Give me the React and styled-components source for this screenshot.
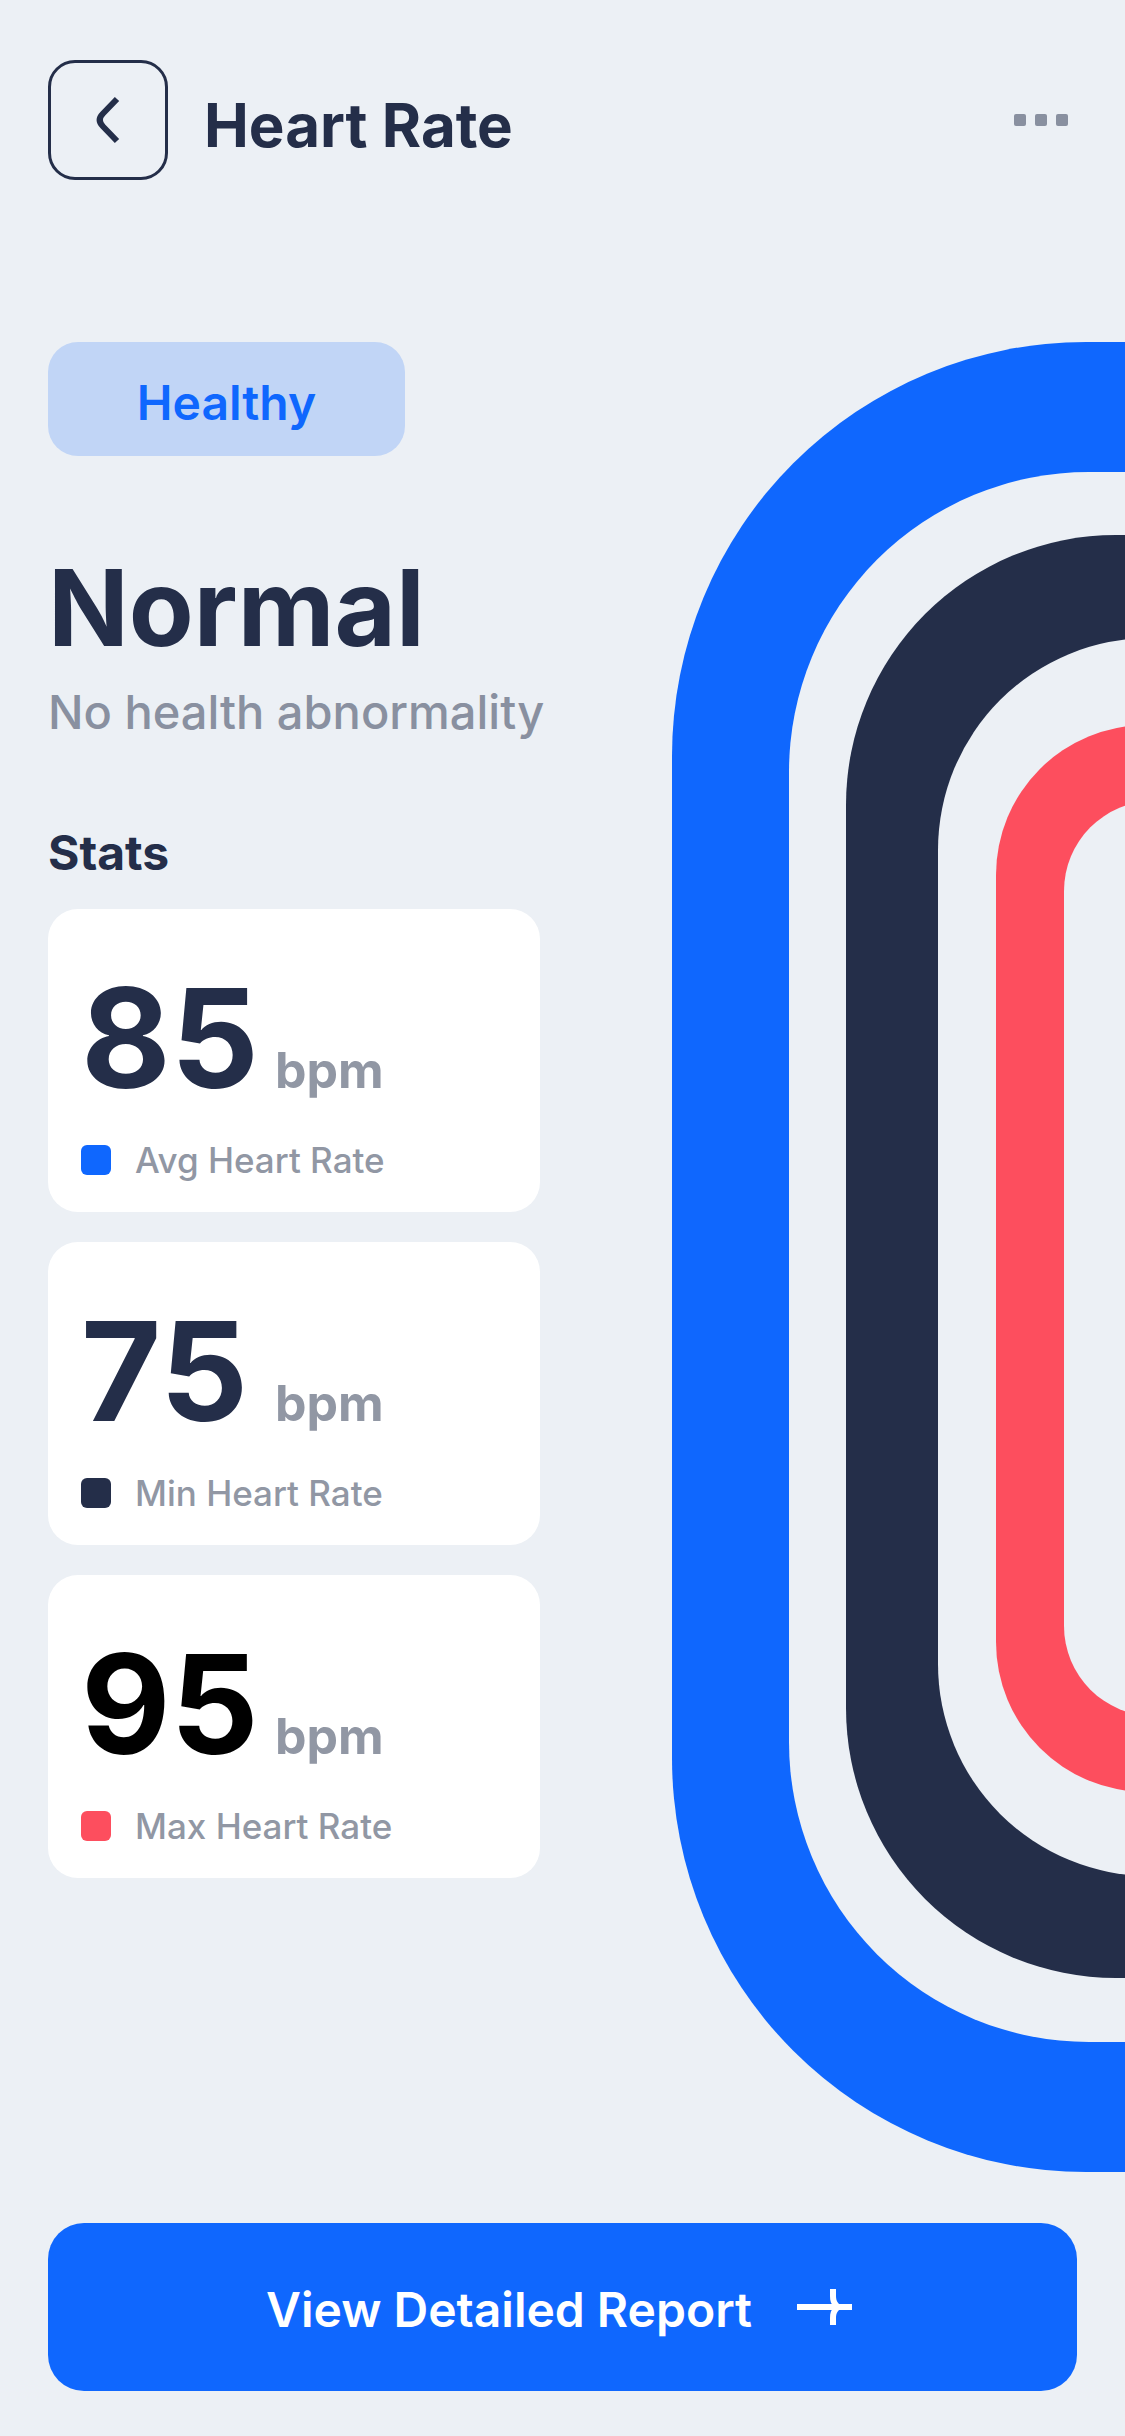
import React from "react";
import styled, { createGlobalStyle } from "styled-components";

const color = {
  page: "#ecf0f5",
  ink: "#242e49",
  blue: "#0f67fe",
  blueSoft: "#c1d5f6",
  red: "#fd4e5e",
  muted: "#8990a0",
  mutedCard: "#9197a4",
};

const GlobalStyle = createGlobalStyle`
  *, *::before, *::after { box-sizing: border-box; }
  body {
    margin: 0;
    background: ${color.page};
    color: ${color.ink};
    font-family: Inter, "Liberation Sans", sans-serif;
  }
  button { font: inherit; cursor: pointer; }
`;

const Screen = styled.div`
  padding: 60px 0 45px;
  overflow: hidden;
`;

const Header = styled.header`
  display: flex;
  align-items: center;
  height: 120px;
  padding: 0 48px;
  gap: 36px;
`;

const BackButton = styled.button`
  display: flex;
  align-items: center;
  justify-content: center;
  width: 120px;
  height: 120px;
  padding: 0;
  border: 3px solid ${color.ink};
  border-radius: 27px;
  background: transparent;
  color: ${color.ink};
`;

const Title = styled.h1`
  flex: 1;
  margin: 0;
  padding-top: 9px;
  font-size: 60px;
  font-weight: 700;
  line-height: 72px;
`;

const MoreButton = styled.button`
  display: flex;
  gap: 9px;
  padding: 24px 9px;
  border: 0;
  background: transparent;
`;

const Dot = styled.span`
  width: 12px;
  height: 12px;
  border-radius: 2px;
  background: ${color.muted};
`;

const Main = styled.main`
  display: grid;
  grid-template-columns: 492px minmax(0, 1fr);
  column-gap: 132px;
  align-items: start;
  padding: 162px 0 0 48px;
`;

const Summary = styled.section`
  display: flex;
  flex-direction: column;
  align-items: flex-start;
`;

const Badge = styled.span`
  display: flex;
  align-items: center;
  justify-content: center;
  width: 357px;
  height: 114px;
  padding-top: 6px;
  border-radius: 30px;
  background: ${color.blueSoft};
  color: ${color.blue};
  font-size: 48px;
  font-weight: 600;
`;

const Status = styled.h2`
  margin: 92px 0 0;
  font-size: 106px;
  font-weight: 700;
  line-height: 120px;
`;

const StatusNote = styled.p`
  margin: 14px 0 0;
  color: ${color.muted};
  font-size: 47px;
  font-weight: 500;
  line-height: 60px;
  white-space: nowrap;
`;

const StatsTitle = styled.h3`
  margin: 81px 0 26px;
  font-size: 48px;
  font-weight: 700;
  line-height: 60px;
`;

const StatList = styled.ul`
  display: flex;
  flex-direction: column;
  gap: 30px;
  width: 100%;
  margin: 0;
  padding: 0;
  list-style: none;
`;

const StatCard = styled.li`
  padding: 54px 33px 37px;
  border-radius: 30px;
  background: #fff;
`;

const Reading = styled.div`
  display: grid;
  grid-template-columns: 194px auto;
  align-items: baseline;
  justify-content: start;
  height: 150px;
`;

const Value = styled.span`
  color: ${(p) => p.$color};
  font-size: 138px;
  font-weight: 700;
  line-height: 150px;
`;

const Unit = styled.span`
  color: ${color.mutedCard};
  font-size: 50px;
  font-weight: 700;
`;

const Legend = styled.div`
  display: flex;
  align-items: center;
  gap: 24px;
  height: 30px;
  margin-top: 32px;
  color: ${color.mutedCard};
  font-size: 35px;
  font-weight: 500;
  line-height: 30px;
`;

const Swatch = styled.span`
  width: 30px;
  height: 30px;
  border-radius: 6px;
  background: ${(p) => p.$color};
`;

const Rings = styled.svg`
  display: block;
  width: 100%;
  height: auto;
`;

const Footer = styled.footer`
  padding: 51px 48px 0;
`;

const ReportButton = styled.button`
  display: flex;
  align-items: center;
  justify-content: center;
  gap: 45px;
  width: 100%;
  height: 168px;
  padding: 0;
  border: 0;
  border-radius: 36px;
  background: ${color.blue};
  color: #fff;
`;

const ReportLabel = styled.span`
  padding-top: 6px;
  font-size: 48px;
  font-weight: 600;
  line-height: 60px;
`;

const stats = [
  { value: 85, label: "Avg Heart Rate", valueColor: color.ink, swatch: color.blue },
  { value: 75, label: "Min Heart Rate", valueColor: color.ink, swatch: color.ink },
  { value: 95, label: "Max Heart Rate", valueColor: "#000", swatch: color.red },
];

function ChevronLeft() {
  return (
    <svg width="24" height="48" viewBox="0 0 24 48" fill="none" aria-hidden="true">
      <path d="M21 3 L7 17.5 Q0.5 24 7 30.5 L21 45" stroke="currentColor" strokeWidth="6" />
    </svg>
  );
}

function ArrowRight() {
  return (
    <svg width="62" height="36" viewBox="0 0 62 36" fill="none" aria-hidden="true">
      <path d="M0 18 H55" stroke="currentColor" strokeWidth="6" />
      <path
        d="M33 0 H39 V7 C39 12 41 15 46 18 C41 21 39 24 39 29 V36 H33 V29 C33 24 34 21 37 18 C34 15 33 12 33 7 Z"
        fill="currentColor"
      />
    </svg>
  );
}

function HeartRings() {
  return (
    <Rings viewBox="0 0 453 1830" role="img" aria-label="Heart rate rings">
      <rect x="0" y="0" width="1400" height="1830" rx="414" fill={color.blue} />
      <rect x="117" y="130" width="1166" height="1570" rx="300" fill={color.page} />
      <rect x="174" y="193" width="1052" height="1443" rx="270" fill={color.ink} />
      <rect x="266" y="296" width="868" height="1238" rx="212" fill={color.page} />
      <rect x="324" y="383" width="752" height="1067" rx="150" fill={color.red} />
      <rect x="392" y="459" width="616" height="915" rx="90" fill={color.page} />
    </Rings>
  );
}

export default function App() {
  return (
    <>
      <GlobalStyle />
      <Screen>
        <Header>
          <BackButton type="button" aria-label="Back">
            <ChevronLeft />
          </BackButton>
          <Title>Heart Rate</Title>
          <MoreButton type="button" aria-label="More options">
            <Dot />
            <Dot />
            <Dot />
          </MoreButton>
        </Header>
        <Main>
          <Summary>
            <Badge>Healthy</Badge>
            <Status>Normal</Status>
            <StatusNote>No health abnormality</StatusNote>
            <StatsTitle>Stats</StatsTitle>
            <StatList>
              {stats.map((s) => (
                <StatCard key={s.label}>
                  <Reading>
                    <Value $color={s.valueColor}>{s.value}</Value>
                    <Unit>bpm</Unit>
                  </Reading>
                  <Legend>
                    <Swatch $color={s.swatch} />
                    {s.label}
                  </Legend>
                </StatCard>
              ))}
            </StatList>
          </Summary>
          <HeartRings />
        </Main>
        <Footer>
          <ReportButton type="button">
            <ReportLabel>View Detailed Report</ReportLabel>
            <ArrowRight />
          </ReportButton>
        </Footer>
      </Screen>
    </>
  );
}
